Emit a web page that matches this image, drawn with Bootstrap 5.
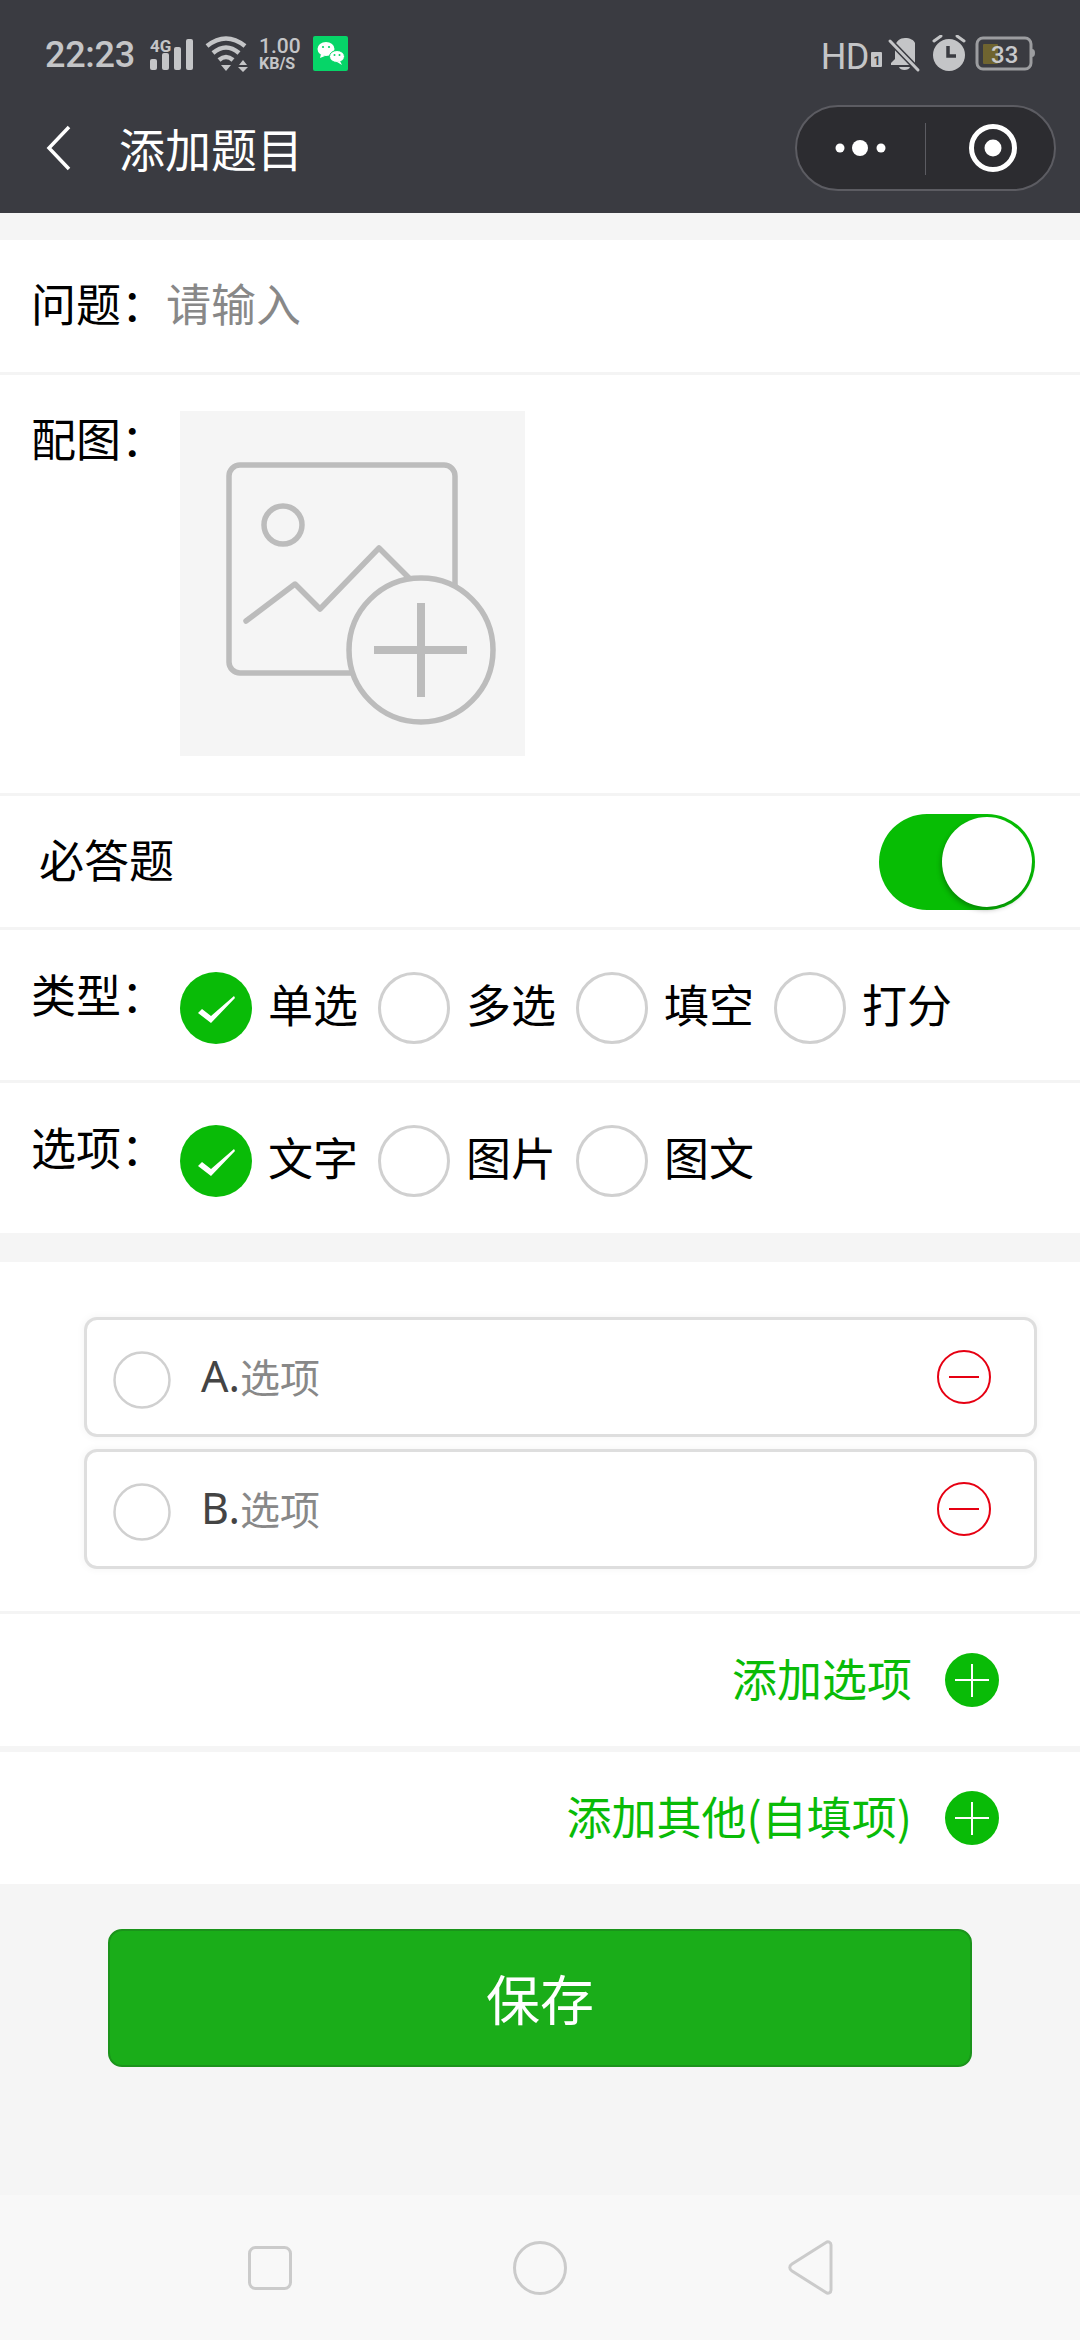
<!DOCTYPE html>
<html lang="zh">
<head>
<meta charset="utf-8">
<title>添加题目</title>
<link href="https://cdn.jsdelivr.net/npm/bootstrap@5.3.0/dist/css/bootstrap.min.css" rel="stylesheet">
<style>
html,body{margin:0;padding:0}
body{width:1080px;height:2340px;background:#f5f5f5;font-family:"Noto Sans CJK SC","Noto Sans",sans-serif;color:#000;overflow:hidden;line-height:1.2}
.phone-head{height:213px;background:#3a3b41}
.status-row{height:82px;padding:35px 44px 0 45px;color:#c4c5c7;font-family:Roboto,sans-serif}
.s-time{font-size:36px;line-height:35px;margin-top:3px;font-weight:500;letter-spacing:-.3px}
.s-hd{font-size:36px;line-height:36px;margin-top:4px;letter-spacing:-.5px}
.title-row{height:131px;padding:0 24px 0 46px}
.title-txt{font-size:46px;color:#fff;margin-left:47px;line-height:60px;margin-top:-2px}
.capsule{width:261px;height:86px;border:2px solid #5c5c62;border-radius:43px;background:#2c2c30;position:relative}
.form-row{background:#fff;font-size:45px;line-height:60px;padding-left:31px}
.gap-top{margin-top:27px}
.div-line{border-bottom:3px solid #f4f4f4}
.q-row{height:135px;padding-top:33px}
.q-ph{color:#888}
.lbl-w{width:149px;flex:none}
.pic-row{height:421px;padding-top:36px}
.pic-lbl{margin-top:-3px;height:60px}
.pic-box{width:345px;height:345px;background:#f5f5f5;display:block}
.req-row{height:134px;padding:0 45px 0 39px}
.req-txt{margin-top:-6px}
.sw-track{width:156px;height:96px;border-radius:48px;background:#07bd04;position:relative}
.sw-knob{position:absolute;top:3px;right:3px;width:90px;height:90px;border-radius:50%;background:#fff;box-shadow:-1px 3px 5px rgba(0,0,0,.28)}
.t-row{height:153px;padding-top:42px}
.o-row{height:150px;padding-top:42px}
.t-label{margin-top:-8px;line-height:60px;height:60px}
.pick{width:198px;flex:none}
.dot{width:72px;height:72px;flex:none;display:block}
.pick-txt{margin-left:16px;line-height:72px;margin-top:-4px}
.opts{background:#fff;height:352px;margin-top:29px;padding:55px 43px 0 84px}
.opt-box{height:120px;border:3px solid #dedede;border-radius:13px;box-shadow:0 0 8px rgba(0,0,0,.05);padding:0 43px 0 26px;margin-bottom:12px;background:#fff;font-size:40px}
.opt-radio{width:58px;height:58px;display:block;flex:none;margin-top:5px}
.opt-l{color:#444;margin-left:30px;font-family:"Noto Sans",sans-serif;font-weight:400;font-size:43px;line-height:60px;margin-top:-2px}
.opt-ph{color:#888;line-height:60px;margin-top:-2px}
.add-row{background:#fff;height:132px;padding-right:81px;color:#09bb07;font-size:45px}
.add-gap{margin-top:6px}
.add-txt{margin-top:-4px}
.add-ic{width:54px;height:54px;margin-left:33px;display:block}
.save-wrap{padding:45px 108px 0 108px}
.save-btn{width:100%;height:138px;font-size:54px;color:#fff;background:#1aad19;border:2px solid #1b931b;border-radius:14px;line-height:1.2;--bs-btn-hover-bg:#1aad19;--bs-btn-hover-color:#fff}
.nav-bot{position:absolute;left:0;right:0;top:2195px;height:145px;background:#f8f8f8}
.nav-bot svg{position:absolute;left:0;top:0}
</style>
</head>
<body>
<div class="phone-head">
  <div class="status-row d-flex justify-content-between align-items-start">
    <div class="d-flex align-items-start">
      <span class="s-time">22:23</span>
      <svg width="270" height="46" viewBox="0 0 270 46" aria-hidden="true">
        <g fill="#c4c5c7">
          <text x="15" y="17" font-family="Roboto" font-weight="700" font-size="17">4G</text>
          <rect x="15" y="24" width="7" height="11" rx="2"/>
          <rect x="27" y="18" width="7" height="17" rx="2"/>
          <rect x="39" y="12" width="7" height="23" rx="2"/>
          <rect x="51" y="4" width="7" height="31" rx="2"/>
        </g>
        <g fill="none" stroke="#c4c5c7" stroke-width="4.5">
          <path d="M72 11 Q91 -4 110 11"/>
          <path d="M78 18 Q91 7 104 18"/>
          <path d="M84 25 Q91 19 98 25"/>
        </g>
        <path d="M86 30h10l-5 6zM104 30l4-5 4 5zM103 32h10l-5 5z" fill="#c4c5c7"/>
        <g fill="#c4c5c7" font-family="Roboto" font-weight="500">
          <text x="124" y="18" font-size="21">1.00</text>
          <text x="124" y="34" font-size="16" font-weight="700">KB/S</text>
        </g>
        <rect x="178" y="1" width="35" height="35" rx="2" fill="#06d568"/>
        <g fill="#fff">
          <ellipse cx="191" cy="14" rx="8.500" ry="7"/>
          <path d="M186 19l-1 4 5-2z"/>
          <ellipse cx="202" cy="21.500" rx="7.500" ry="6" stroke="#06d568" stroke-width="1"/>
          <path d="M205 26l2 4-5-3z"/>
        </g>
        <g fill="#06d568"><circle cx="188" cy="12" r="1.100"/><circle cx="194" cy="12" r="1.100"/><circle cx="199.500" cy="20" r="1"/><circle cx="204.500" cy="20" r="1"/></g>
      </svg>
    </div>
    <div class="d-flex align-items-start">
      <span class="s-hd">HD</span>
      <svg width="167" height="46" viewBox="0 0 167 46" aria-hidden="true">
        <rect x="2" y="17" width="11" height="15" rx="1" fill="#c4c5c7"/>
        <text x="4.500" y="29.500" font-family="Roboto" font-weight="700" font-size="12" fill="#3a3b41">1</text>
        <path d="M36 3c-5 0-9 3-10 9v12l-4 4v2h24v-22c-1-3-5-5-10-5zM30 32h11c-1 4-10 4-11 0z" fill="#c4c5c7"/>
        <path d="M21 6l28 29" stroke="#3a3b41" stroke-width="6"/>
        <path d="M21 6l28 29" stroke="#c4c5c7" stroke-width="3" stroke-linecap="round"/>
        <circle cx="80" cy="20" r="16" fill="#c4c5c7"/>
        <path d="M79 11v10h8" fill="none" stroke="#3a3b41" stroke-width="3.500"/>
        <path d="M65 6l7-5M95 6l-7-5" stroke="#c4c5c7" stroke-width="3" stroke-linecap="round"/>
        <rect x="108" y="3" width="54" height="31" rx="6" fill="none" stroke="#9c9da0" stroke-width="3"/>
        <rect x="114" y="9" width="15" height="20" rx="1" fill="#6f6430"/>
        <path d="M163 14a3 4 0 0 1 0 8z" fill="#9c9da0"/>
        <text x="122" y="28" font-family="Roboto" font-size="24" font-weight="500" fill="#c8c9cb">33</text>
      </svg>
    </div>
  </div>
  <div class="title-row d-flex align-items-center">
    <svg width="26" height="46" viewBox="0 0 26 46" aria-hidden="true" class="flex-shrink-0"><path d="M23 2L3 23l20 21" fill="none" stroke="#fff" stroke-width="3.500"/></svg>
    <span class="title-txt">添加题目</span>
    <div class="capsule ms-auto">
      <svg width="257" height="82" viewBox="0 0 257 82" aria-hidden="true" class="d-block">
        <circle cx="43" cy="41" r="4.500" fill="#fff"/><circle cx="63" cy="41" r="8" fill="#fff"/><circle cx="84" cy="41" r="4.500" fill="#fff"/>
        <rect x="128" y="16" width="1" height="52" fill="#5c5c62"/>
        <circle cx="196" cy="41" r="21.500" fill="none" stroke="#fff" stroke-width="5"/>
        <circle cx="196" cy="41" r="8.500" fill="#fff"/>
      </svg>
    </div>
  </div>
</div>

<div class="form-row gap-top q-row div-line d-flex">
  <span class="text-nowrap">问题：</span><span class="q-ph">请输入</span>
</div>
<div class="form-row pic-row div-line d-flex">
  <span class="lbl-w pic-lbl">配图：</span>
  <svg class="pic-box" viewBox="0 0 345 345" aria-hidden="true">
    <g fill="none" stroke="#bcbcbc" stroke-width="5.500">
      <rect x="49" y="54" width="226" height="208" rx="11"/>
      <circle cx="103" cy="114" r="19"/>
      <path d="M66 210l49-37 25 25 59-61 30 30" stroke-linecap="round" stroke-linejoin="round"/>
      <circle cx="241" cy="239" r="72" fill="#f5f5f5"/>
    </g>
    <path d="M194 239h93M241 192v94" stroke="#bcbcbc" stroke-width="8" fill="none"/>
  </svg>
</div>
<div class="form-row req-row div-line d-flex justify-content-between align-items-center">
  <span class="req-txt">必答题</span>
  <div class="sw-track"><div class="sw-knob"></div></div>
</div>
<div class="form-row t-row div-line d-flex">
  <span class="lbl-w t-label">类型：</span>
  <div class="d-flex">
    <div class="pick d-flex"><svg class="dot" viewBox="0 0 72 72" aria-hidden="true"><circle cx="36" cy="36" r="36" fill="#09bb07"/><path d="M18 41l4-4 9 7 23-20 1 2-24 25z" fill="#fff"/></svg><span class="pick-txt">单选</span></div>
    <div class="pick d-flex"><svg class="dot" viewBox="0 0 72 72" aria-hidden="true"><circle cx="36" cy="36" r="34.500" fill="#fff" stroke="#d0d0d0" stroke-width="3"/></svg><span class="pick-txt">多选</span></div>
    <div class="pick d-flex"><svg class="dot" viewBox="0 0 72 72" aria-hidden="true"><circle cx="36" cy="36" r="34.500" fill="#fff" stroke="#d0d0d0" stroke-width="3"/></svg><span class="pick-txt">填空</span></div>
    <div class="pick d-flex"><svg class="dot" viewBox="0 0 72 72" aria-hidden="true"><circle cx="36" cy="36" r="34.500" fill="#fff" stroke="#d0d0d0" stroke-width="3"/></svg><span class="pick-txt">打分</span></div>
  </div>
</div>
<div class="form-row o-row d-flex">
  <span class="lbl-w t-label">选项：</span>
  <div class="d-flex">
    <div class="pick d-flex"><svg class="dot" viewBox="0 0 72 72" aria-hidden="true"><circle cx="36" cy="36" r="36" fill="#09bb07"/><path d="M18 41l4-4 9 7 23-20 1 2-24 25z" fill="#fff"/></svg><span class="pick-txt">文字</span></div>
    <div class="pick d-flex"><svg class="dot" viewBox="0 0 72 72" aria-hidden="true"><circle cx="36" cy="36" r="34.500" fill="#fff" stroke="#d0d0d0" stroke-width="3"/></svg><span class="pick-txt">图片</span></div>
    <div class="pick d-flex"><svg class="dot" viewBox="0 0 72 72" aria-hidden="true"><circle cx="36" cy="36" r="34.500" fill="#fff" stroke="#d0d0d0" stroke-width="3"/></svg><span class="pick-txt">图文</span></div>
  </div>
</div>

<div class="opts div-line">
  <div class="opt-box d-flex align-items-center">
    <svg class="opt-radio" viewBox="0 0 58 58" aria-hidden="true"><circle cx="29" cy="29" r="27.500" fill="none" stroke="#d0d0d0" stroke-width="2.500"/></svg>
    <span class="opt-l">A.</span><span class="opt-ph">选项</span>
    <svg class="ms-auto" width="54" height="54" viewBox="0 0 54 54" aria-hidden="true"><circle cx="27" cy="27" r="26" fill="none" stroke="#e60012" stroke-width="2"/><path d="M12 27h30" stroke="#e60012" stroke-width="2"/></svg>
  </div>
  <div class="opt-box d-flex align-items-center">
    <svg class="opt-radio" viewBox="0 0 58 58" aria-hidden="true"><circle cx="29" cy="29" r="27.500" fill="none" stroke="#d0d0d0" stroke-width="2.500"/></svg>
    <span class="opt-l">B.</span><span class="opt-ph">选项</span>
    <svg class="ms-auto" width="54" height="54" viewBox="0 0 54 54" aria-hidden="true"><circle cx="27" cy="27" r="26" fill="none" stroke="#e60012" stroke-width="2"/><path d="M12 27h30" stroke="#e60012" stroke-width="2"/></svg>
  </div>
</div>
<div class="add-row d-flex justify-content-end align-items-center">
  <span class="add-txt">添加选项</span>
  <svg class="add-ic" viewBox="0 0 54 54" aria-hidden="true"><circle cx="27" cy="27" r="27" fill="#09bb07"/><path d="M10 27h34M27 11v33" stroke="#fff" stroke-width="2"/></svg>
</div>
<div class="add-row add-gap d-flex justify-content-end align-items-center">
  <span class="add-txt">添加其他(自填项)</span>
  <svg class="add-ic" viewBox="0 0 54 54" aria-hidden="true"><circle cx="27" cy="27" r="27" fill="#09bb07"/><path d="M10 27h34M27 11v33" stroke="#fff" stroke-width="2"/></svg>
</div>
<div class="save-wrap"><button type="button" class="btn save-btn p-0">保存</button></div>

<div class="nav-bot">
  <svg width="1080" height="145" viewBox="0 0 1080 145" aria-hidden="true">
    <g fill="none" stroke="#cbcbcb" stroke-width="3">
      <rect x="249.500" y="52.500" width="41" height="41" rx="6"/>
      <circle cx="540" cy="73" r="25.500"/>
      <path d="M826 47.500c2-1.500 5-.5 5 2.500v45c0 3-3 4-5 2.500L792 76c-3-2-3-5 0-7z"/>
    </g>
  </svg>
</div>
<script src="https://cdn.jsdelivr.net/npm/bootstrap@5.3.0/dist/js/bootstrap.bundle.min.js"></script>
</body>
</html>
